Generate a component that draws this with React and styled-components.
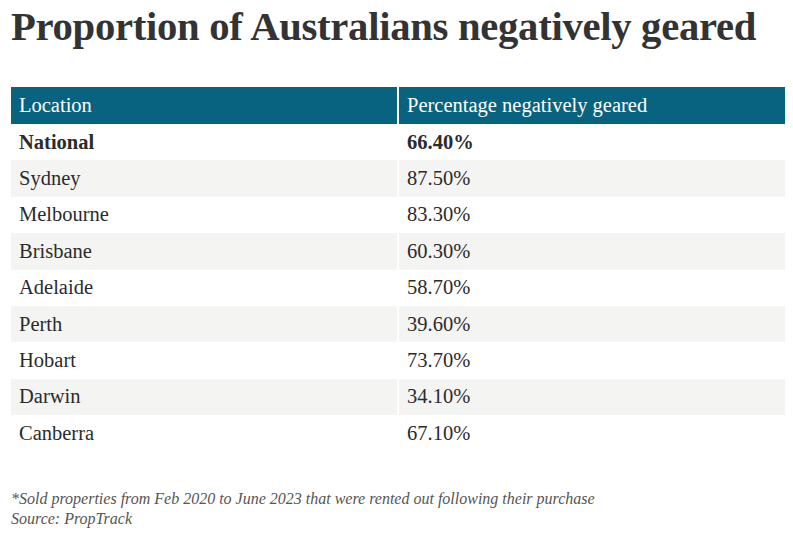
import styled, { createGlobalStyle } from "styled-components";

const rows = [
    { location: "National", pct: "66.40%", strong: true },
    { location: "Sydney", pct: "87.50%" },
    { location: "Melbourne", pct: "83.30%" },
    { location: "Brisbane", pct: "60.30%" },
    { location: "Adelaide", pct: "58.70%" },
    { location: "Perth", pct: "39.60%" },
    { location: "Hobart", pct: "73.70%" },
    { location: "Darwin", pct: "34.10%" },
    { location: "Canberra", pct: "67.10%" },
];

export default function App() {
    return (
        <>
            <GlobalStyle />
            <Page>
                <Title>Proportion of Australians negatively geared</Title>

                <Table>
                    <thead>
                        <tr>
                            <HeadCell $first>Location</HeadCell>
                            <HeadCell>Percentage negatively geared</HeadCell>
                        </tr>
                    </thead>
                    <tbody>
                        {rows.map((row, i) => (
                            <Row key={row.location} $shaded={i % 2 === 1}>
                                <Cell $strong={row.strong} $first>{row.location}</Cell>
                                <Cell $strong={row.strong}>{row.pct}</Cell>
                            </Row>
                        ))}
                    </tbody>
                </Table>

                <Footnote>
                    *Sold properties from Feb 2020 to June 2023 that were rented out following their purchase
                    <br />
                    Source: PropTrack
                </Footnote>
            </Page>
        </>
    );
}

const GlobalStyle = createGlobalStyle`
    body {
        margin: 0;
        background: #ffffff;
    }
`;

const Page = styled.div`
    width: 793px;
    height: 549px;
    padding: 0 8px 0 11px;
    box-sizing: border-box;

    font-family: "Liberation Serif", "Times New Roman", serif;
    color: #2b2b2b;
`;

const Title = styled.h1`
    margin: 0;
    padding-top: 3px;

    font-size: 40.7px;
    line-height: 48px;
    font-weight: 700;
    color: #333333;
    letter-spacing: -0.3px;
`;

const Table = styled.table`
    width: 774px;
    margin-top: 36px;

    border-collapse: collapse;
    table-layout: fixed;
`;

const HeadCell = styled.th`
    width: ${props => props.$first ? "370px" : "auto"};
    height: 37px;
    padding: 0 8px;

    text-align: left;
    font-size: 20.5px;
    font-weight: 400;
    color: #ffffff;
    background-color: #07637f;

    border-left: ${props => props.$first ? "none" : "2px solid #ffffff"};
`;

const Row = styled.tr`
    background-color: ${props => props.$shaded ? "#f4f4f2" : "#ffffff"};
`;

const Cell = styled.td`
    height: 36.4px;
    padding: 0 8px;

    font-size: 20.5px;
    font-weight: ${props => props.$strong ? 700 : 400};
    color: #2b2b2b;

    border-left: ${props => props.$first ? "none" : "2px solid #ffffff"};
`;

const Footnote = styled.p`
    margin: 37px 0 0;

    font-family: "Liberation Serif", "Times New Roman", serif;
    font-style: italic;
    font-size: 16px;
    line-height: 20px;
    color: #555555;
`;
